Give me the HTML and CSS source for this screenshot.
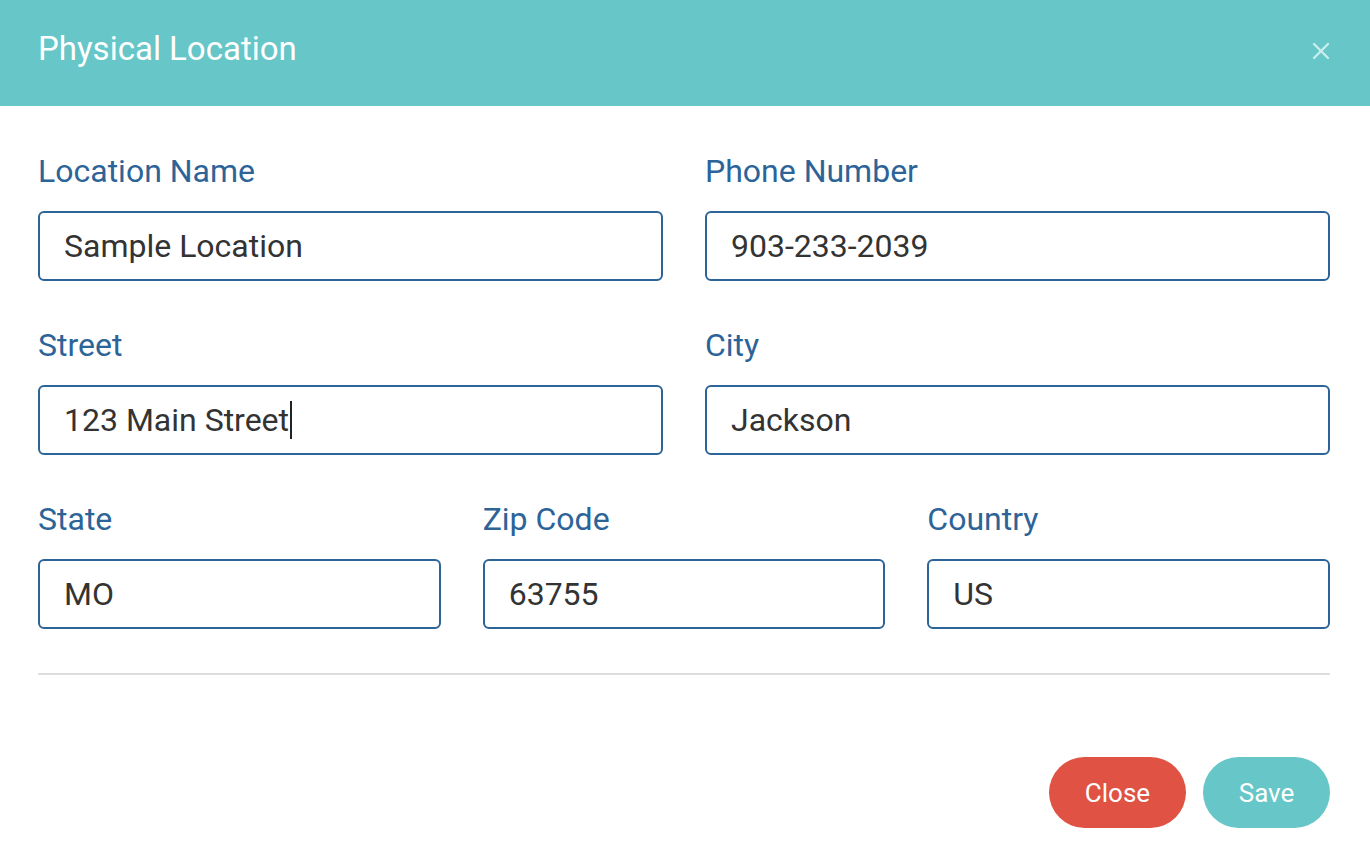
FILE: index.html
```html
<!DOCTYPE html>
<html>
<head>
<meta charset="utf-8">
<link rel="stylesheet" href="styles.css">
</head>
<body>
<div class="modal">
  <div class="modal-header">
    <h1 class="modal-title">Physical Location</h1>
    <button class="close-x" aria-label="Close">
      <svg width="18" height="18" viewBox="0 0 18 18"><path d="M2 2L16 16M16 2L2 16" stroke="#c8eeee" stroke-width="2.4" stroke-linecap="round"/></svg>
    </button>
  </div>
  <div class="modal-body">
    <div class="row two">
      <div class="field">
        <label class="label">Location Name</label>
        <div class="input">Sample Location</div>
      </div>
      <div class="field">
        <label class="label">Phone Number</label>
        <div class="input">903-233-2039</div>
      </div>
    </div>
    <div class="row two">
      <div class="field">
        <label class="label">Street</label>
        <div class="input">123 Main Street<span class="caret"></span></div>
      </div>
      <div class="field">
        <label class="label">City</label>
        <div class="input">Jackson</div>
      </div>
    </div>
    <div class="row three">
      <div class="field">
        <label class="label">State</label>
        <div class="input">MO</div>
      </div>
      <div class="field">
        <label class="label">Zip Code</label>
        <div class="input">63755</div>
      </div>
      <div class="field">
        <label class="label">Country</label>
        <div class="input">US</div>
      </div>
    </div>
    <hr class="divider">
    <div class="footer">
      <button class="btn btn-close">Close</button>
      <button class="btn btn-save">Save</button>
    </div>
  </div>
</div>
</body>
</html>
```

FILE: styles.css
```css
html, body {
  margin: 0;
  padding: 0;
  background: #ffffff;
  font-family: Roboto, "Liberation Sans", sans-serif;
}

.modal {
  width: 1370px;
  height: 862px;
  background: #ffffff;
}

.modal-header {
  height: 106px;
  background: #67c6c7;
  display: flex;
  align-items: center;
  justify-content: space-between;
  padding: 0 40px 0 38px;
  box-sizing: border-box;
}

.modal-title {
  margin: 0;
  font-size: 33px;
  font-weight: 400;
  color: #ffffff;
  padding-bottom: 10px;
}

.close-x {
  background: none;
  border: none;
  padding: 0;
  width: 18px;
  height: 18px;
  display: flex;
  margin-bottom: 4px;
}

.modal-body {
  padding: 45px 40px 0 38px;
}

.row {
  display: grid;
  column-gap: 42px;
  margin-bottom: 44px;
}

.row:last-of-type {
  margin-bottom: 0;
}

.row.two { grid-template-columns: 1fr 1fr; }
.row.three { grid-template-columns: 1fr 1fr 1fr; }

.field {
  display: flex;
  flex-direction: column;
}

.label {
  font-size: 32px;
  line-height: 40px;
  color: #2d6498;
  margin-bottom: 20px;
}

.input {
  height: 70px;
  box-sizing: border-box;
  border: 2px solid #2d6498;
  border-radius: 6px;
  padding: 0 24px;
  display: flex;
  align-items: center;
  font-size: 32px;
  color: #333333;
}

.caret {
  display: inline-block;
  width: 2px;
  height: 38px;
  background: #222;
  margin-left: 1px;
}

.divider {
  border: none;
  height: 2px;
  background: #dddddd;
  margin: 41px 0 0 0;
}

.footer {
  display: flex;
  justify-content: flex-end;
  gap: 17px;
  margin-top: 82px;
}

.btn {
  height: 71px;
  border: none;
  border-radius: 36px;
  font-family: Roboto, "Liberation Sans", sans-serif;
  font-size: 26px;
  color: #ffffff;
  padding: 0 32px;
}

.btn-close {
  background: #e05243;
  width: 137px;
}

.btn-save {
  background: #67c6c7;
  width: 127px;
}
```
